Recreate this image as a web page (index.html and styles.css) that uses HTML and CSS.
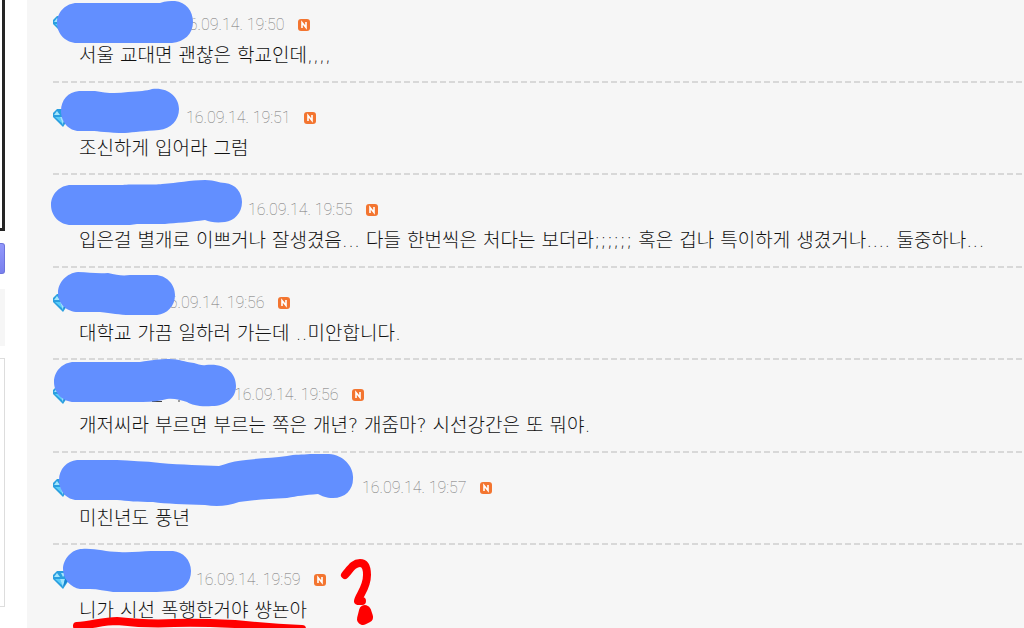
FILE: index.html
```
<!DOCTYPE html>
<html lang="ko">
<head>
    <meta charset="UTF-8">
    <meta name="viewport" content="width=device-width, initial-scale=1.0">
    <title>댓글</title>
    <link rel="stylesheet" href="styles.css">
</head>
<body>
    <svg class="defs" width="0" height="0" aria-hidden="true">
        <symbol id="gem" viewBox="0 0 18 18">
            <path d="M4 0h9l5 6-8 12L0 8V4z" fill="#2a9fe0"/>
            <path d="M4 2l3 4H1zM8 2h5l-3 4z" fill="#a5e6fc"/>
            <path d="M2 8h5l3 7z" fill="#5ccdf8"/>
            <path d="M7 8h5l-2 8z" fill="#a2e4fd"/>
            <path d="M12 8h4l-6 8z" fill="#1685cf"/>
        </symbol>
        <symbol id="new" viewBox="0 0 12 12">
            <rect width="12" height="12" rx="3" fill="#f37530"/>
            <path d="M4 9V3.5L8 8.5V3" fill="none" stroke="#fff" stroke-width="1.6"/>
        </symbol>
    </svg>

    <div class="page">
        <aside class="side">
            <div class="frame"></div>
            <div class="tab"></div>
            <div class="panel"></div>
            <div class="box"></div>
        </aside>

        <main class="content">
            <ul class="comments">
                <li class="comment">
                    <div class="info">
                        <svg class="gem"><use href="#gem"/></svg>
                        <span class="nick" style="width: 103px"></span>
                        <time class="date">16.09.14. 19:50</time>
                        <svg class="new"><use href="#new"/></svg>
                    </div>
                    <p class="text">서울 교대면 괜찮은 학교인데,,,,</p>
                </li>
                <li class="comment">
                    <div class="info">
                        <svg class="gem"><use href="#gem"/></svg>
                        <span class="nick" style="width: 109px"></span>
                        <time class="date">16.09.14. 19:51</time>
                        <svg class="new"><use href="#new"/></svg>
                    </div>
                    <p class="text">조신하게 입어라 그럼</p>
                </li>
                <li class="comment">
                    <div class="info">
                        <svg class="gem"><use href="#gem"/></svg>
                        <span class="nick" style="width: 171px"></span>
                        <time class="date">16.09.14. 19:55</time>
                        <svg class="new"><use href="#new"/></svg>
                    </div>
                    <p class="text">입은걸 별개로 이쁘거나 잘생겼음... 다들 한번씩은 처다는 보더라;;;;;; 혹은 겁나 특이하게 생겼거나.... 둘중하나...</p>
                </li>
                <li class="comment">
                    <div class="info">
                        <svg class="gem"><use href="#gem"/></svg>
                        <span class="nick" style="width: 83px"></span>
                        <time class="date">16.09.14. 19:56</time>
                        <svg class="new"><use href="#new"/></svg>
                    </div>
                    <p class="text">대학교 가끔 일하러 가는데 ..미안합니다.</p>
                </li>
                <li class="comment">
                    <div class="info">
                        <svg class="gem"><use href="#gem"/></svg>
                        <span class="nick" style="width: 157px"></span>
                        <time class="date">16.09.14. 19:56</time>
                        <svg class="new"><use href="#new"/></svg>
                    </div>
                    <p class="text">개저씨라 부르면 부르는 쪽은 개년? 개줌마? 시선강간은 또 뭐야.</p>
                </li>
                <li class="comment">
                    <div class="info">
                        <svg class="gem"><use href="#gem"/></svg>
                        <span class="nick" style="width: 285px"></span>
                        <time class="date">16.09.14. 19:57</time>
                        <svg class="new"><use href="#new"/></svg>
                    </div>
                    <p class="text">미친년도 풍년</p>
                </li>
                <li class="comment">
                    <div class="info">
                        <svg class="gem"><use href="#gem"/></svg>
                        <span class="nick" style="width: 119px"></span>
                        <time class="date">16.09.14. 19:59</time>
                        <svg class="new"><use href="#new"/></svg>
                    </div>
                    <p class="text">니가 시선 폭행한거야 썅뇬아</p>
                </li>
            </ul>
        </main>

        <!-- marker strokes over the nicknames -->
        <svg class="marker" width="1024" height="628" viewBox="0 0 1024 628" aria-hidden="true">
            <path d="M152 401.500h10M178 401h2" stroke="#444" stroke-width="1"/>
            <g fill="#628fff">
                <path d="M77 3H160C166 1 170 1 175 1C186 2 193 11 193 22C193 34 184 42 172 43H77C66 43 57 34 57 23S66 3 77 3z"/>
                <path d="M79 91H95C105 93 116 94 128 92C140 91 146 91 152 89C168 87 179 97 179 109C179 120 171 129 159 130C145 131 134 132 125 133C108 133 98 131 92 131H79C69 131 61 122 61 111S68 92 79 91z"/>
                <path d="M71 185H123C130 184 155 185 162 184C178 183 190 180 205 180C216 180 218 183 225 183C236 184 242 193 242 202C242 213 234 221 225 222C216 223 210 222 205 220C191 222 175 223 165 224H137L130 225H71C60 225 51 216 51 205S60 185 71 185z"/>
                <path d="M78 272C89 272 96 274 108 273C117 275 122 276 130 275H155C166 275 175 284 175 295S167 314 157 315H130C119 315 112 313 100 312H78C67 312 58 304 58 293S67 273 78 272z"/>
                <path d="M74 362H140C152 360 160 359 169 359C180 359 184 362 194 363C198 364 202 366 206 365C227 363 236 374 236 386C236 398 226 406 212 406C200 407 192 405 187 402C180 400 174 398 167 399C160 401 152 402 143 402H74C63 402 54 393 54 382S63 362 74 362z"/>
                <path d="M77 460H117C130 461 145 461 160 463C183 465 202 465 219 466C229 463 234 461 246 460C261 458 274 458 287 456C295 454 302 455 310 454H329C344 455 354 467 353 479C353 490 345 498 333 498C326 498 322 496 318 494C304 495 298 496 287 498C266 499 252 500 239 502C228 506 217 507 205 505C184 504 166 504 153 502C138 502 127 501 117 500H77C67 500 59 491 59 480S67 461 77 460z"/>
                <path d="M82 549C95 548 105 552 119 552C130 553 142 551 151 551H173C183 552 191 560 191 571S184 590 173 591C162 592 151 592 141 592H113C105 591 98 589 90 589H80C71 588 63 579 63 569S72 549 82 549z"/>
            </g>
            <g fill="none" stroke="#f00" stroke-linecap="round" stroke-linejoin="round">
                <path d="M345 575C351 568 354 563 360 563C365 563 367 567 367 575C367 588 359 595 358 601L362 601" stroke-width="8"/>
                <path d="M365 611L367 617L363 619z" stroke-width="12"/>
                <path d="M77 626C92 625 103 621 117 621C135 623 158 624 174 623C195 622 215 623 235 624C254 626 277 628 302 629" stroke-width="8"/>
            </g>
        </svg>
    </div>
</body>
</html>
```
FILE: styles.css
```
* {
    box-sizing: border-box;
}
body {
    margin: 0;
    height: 100vh;
    overflow: hidden;
    background-color: #fff;
    font-family: "DejaVu Sans", "Noto Sans CJK KR", sans-serif;
}
.defs {
    display: block;
}
.page {
    position: relative;
    display: flex;
    height: 100%;
    overflow: hidden;
}
.side {
    width: 27px;
    flex-shrink: 0;
    padding-right: 22px;
}
.frame {
    height: 231px;
    border-right: 3px solid #252525;
    border-bottom: 3px solid #252525;
}
.tab {
    height: 31px;
    margin-top: 12px;
    border: 1px solid #6d74dc;
    border-left: 0;
    border-radius: 0 3px 3px 0;
    background: linear-gradient(#9298fb, #7980ed);
}
.panel {
    height: 57px;
    margin-top: 15px;
    background-color: #f6f6f6;
}
.box {
    height: 249px;
    margin-top: 12px;
    border: 1px solid #ddd;
    border-left: 0;
}
.content {
    flex: 1;
    padding-left: 26px;
    background-color: #f6f6f6;
}
.comments {
    margin: -10px 0 0;
    padding: 0;
    list-style: none;
}
.comment {
    height: 93px;
    padding-top: 25px;
    background: repeating-linear-gradient(90deg, #d8d8d8 0 6px, transparent 6px 9px) bottom / 100% 2px no-repeat;
}
.comment:nth-child(even) {
    height: 92px;
}
.info {
    display: flex;
    align-items: center;
    height: 20px;
}
.gem {
    width: 18px;
    height: 18px;
    margin-right: 6px;
}
.date {
    width: 106px;
    color: #777;
    font-family: Roboto, sans-serif;
    font-size: 16px;
    font-weight: 100;
    line-height: 20px;
    white-space: nowrap;
}
.new {
    width: 12px;
    height: 12px;
    margin-left: 12px;
}
.text {
    margin: 6px 0 0;
    padding-left: 26px;
    color: #111;
    font-size: 19px;
    font-weight: 300;
    line-height: 28px;
    white-space: nowrap;
}
.marker {
    position: absolute;
    top: 0;
    left: 0;
}
```
